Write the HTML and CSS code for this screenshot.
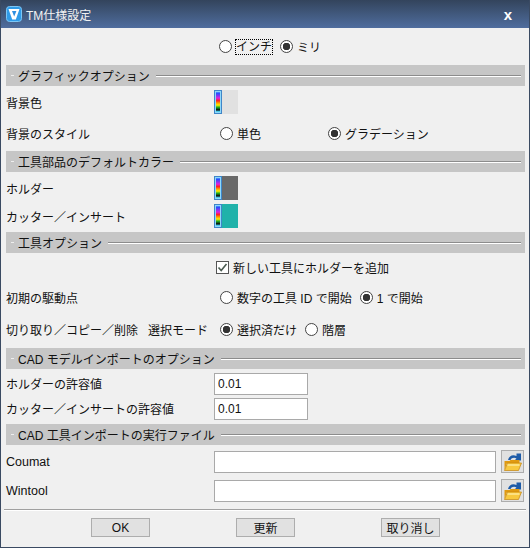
FILE: index.html
```html
<!DOCTYPE html>
<html lang="ja">
<head>
    <meta charset="UTF-8">
    <meta name="viewport" content="width=device-width, initial-scale=1.0">
    <title>TM仕様設定</title>
    <link rel="stylesheet" href="styles.css">
</head>
<body>
    <div class="dialog">
        <div class="titlebar">
            <svg class="app-icon" width="16" height="16" viewBox="0 0 16 16">
                <rect x="0.5" y="0.5" width="15" height="15" rx="3" fill="#2f9be8" stroke="#7cc6f5"/>
                <path d="M2.5 3h11L9.8 13.5H6.2Z" fill="#fff"/>
                <path d="M6 5h4.4L8.2 10.5Z" fill="#2f8fe0"/>
            </svg>
            <span class="title-text">TM仕様設定</span>
            <span class="close">x</span>
        </div>

        <div class="content">
            <div class="unit-row">
                <label class="option"><input type="radio" name="unit"><span class="focused">インチ</span></label>
                <label class="option"><input type="radio" name="unit" checked><span>ミリ</span></label>
            </div>

            <div class="section-bar"><span class="section-title">グラフィックオプション</span><span class="section-line"></span></div>
            <div class="row swatch-row-first">
                <span class="row-label">背景色</span>
                <div class="swatch"><span class="rainbow"></span><span class="swatch-color color-bg"></span></div>
            </div>
            <div class="row row-30">
                <span class="row-label">背景のスタイル</span>
                <div class="options">
                    <label class="option option-wide"><input type="radio" name="bg"><span>単色</span></label>
                    <label class="option"><input type="radio" name="bg" checked><span>グラデーション</span></label>
                </div>
            </div>

            <div class="section-bar bar-gap"><span class="section-title">工具部品のデフォルトカラー</span><span class="section-line"></span></div>
            <div class="row row-28 first-after-bar">
                <span class="row-label">ホルダー</span>
                <div class="swatch"><span class="rainbow"></span><span class="swatch-color color-holder"></span></div>
            </div>
            <div class="row row-28">
                <span class="row-label">カッター／インサート</span>
                <div class="swatch"><span class="rainbow"></span><span class="swatch-color color-cutter"></span></div>
            </div>

            <div class="section-bar bar-gap-small"><span class="section-title">工具オプション</span><span class="section-line"></span></div>
            <div class="row row-28">
                <span class="row-label"></span>
                <label class="option check-option">
                    <span class="checkbox">
                        <svg width="11" height="11" viewBox="0 0 11 11"><path d="M1.5 5.5L4.2 8.5L9.5 2" fill="none" stroke="#4a5a50" stroke-width="1.6"/></svg>
                    </span>
                    <span>新しい工具にホルダーを追加</span>
                </label>
            </div>
            <div class="row row-32">
                <span class="row-label">初期の駆動点</span>
                <div class="options">
                    <label class="option"><input type="radio" name="start"><span>数字の工具 ID で開始</span></label>
                    <label class="option"><input type="radio" name="start" checked><span>1 で開始</span></label>
                </div>
            </div>
            <div class="row row-32">
                <span class="row-label">切り取り／コピー／削除<span class="mode-name">選択モード</span></span>
                <div class="options">
                    <label class="option"><input type="radio" name="mode" checked><span>選択済だけ</span></label>
                    <label class="option"><input type="radio" name="mode"><span>階層</span></label>
                </div>
            </div>

            <div class="section-bar bar-gap"><span class="section-title">CAD モデルインポートのオプション</span><span class="section-line"></span></div>
            <div class="row row-25 first-after-bar">
                <span class="row-label">ホルダーの許容値</span>
                <input class="text-input short" type="text" value="0.01">
            </div>
            <div class="row row-25">
                <span class="row-label">カッター／インサートの許容値</span>
                <input class="text-input short" type="text" value="0.01">
            </div>

            <div class="section-bar bar-gap"><span class="section-title">CAD 工具インポートの実行ファイル</span><span class="section-line"></span></div>
            <div class="row row-29 first-after-bar">
                <span class="row-label latin">Coumat</span>
                <input class="text-input long" type="text">
                <button class="folder-btn" type="button">
                    <svg width="18" height="18" viewBox="0 0 18 18">
                        <path d="M4 7C5 2.5 9 1 12.5 3V0.5H17V7.5H10.5L12.5 5.5C10 4 7.5 5 6.5 7Z" fill="#1d5ba8"/>
                        <path d="M0.5 8h5l1-1h9v3H3L0.5 17Z" fill="#e09a10"/>
                        <path d="M3.5 10H17.5L14.5 17.5H0.5Z" fill="#f8c93f" stroke="#c5850f" stroke-width="0.7"/>
                        <path d="M3.5 12h12" stroke="#fff2b0" stroke-width="1.2"/>
                    </svg>
                </button>
            </div>
            <div class="row row-29">
                <span class="row-label latin">Wintool</span>
                <input class="text-input long" type="text">
                <button class="folder-btn" type="button">
                    <svg width="18" height="18" viewBox="0 0 18 18">
                        <path d="M4 7C5 2.5 9 1 12.5 3V0.5H17V7.5H10.5L12.5 5.5C10 4 7.5 5 6.5 7Z" fill="#1d5ba8"/>
                        <path d="M0.5 8h5l1-1h9v3H3L0.5 17Z" fill="#e09a10"/>
                        <path d="M3.5 10H17.5L14.5 17.5H0.5Z" fill="#f8c93f" stroke="#c5850f" stroke-width="0.7"/>
                        <path d="M3.5 12h12" stroke="#fff2b0" stroke-width="1.2"/>
                    </svg>
                </button>
            </div>

            <hr class="separator">
            <div class="buttons">
                <button type="button">OK</button>
                <button type="button">更新</button>
                <button type="button">取り消し</button>
            </div>
        </div>
    </div>
</body>
</html>
```

FILE: styles.css
```css
* {
    box-sizing: border-box;
}

body {
    margin: 0;
    background: #fff;
    font-family: "Liberation Sans", "Noto Sans CJK JP", sans-serif;
    font-size: 12px;
    color: #111;
}

.dialog {
    width: 530px;
    height: 548px;
    background: #f0f0f0;
    border: 1px solid #3a4a62;
    border-top: 0;
    overflow: hidden;
}

.titlebar {
    height: 28px;
    margin: 0 -1px;
    padding: 0 18px 0 6px;
    display: flex;
    align-items: center;
    background: linear-gradient(#33445c, #4f6d9e);
    color: #fff;
}

.app-icon {
    flex: none;
}

.title-text {
    margin-left: 4px;
    color: #f2f2f2;
}

.close {
    margin-left: auto;
    font-size: 15px;
    font-weight: bold;
    line-height: 1;
}

.content {
    padding: 0 4px 0 5px;
}

.unit-row {
    height: 37px;
    padding-left: 213px;
    display: flex;
    align-items: center;
    gap: 8px;
}

.option {
    display: flex;
    align-items: center;
    gap: 4px;
}

.option-wide {
    width: 100px;
}

.options {
    padding-left: 6px;
    display: flex;
    gap: 8px;
}

.option input {
    appearance: none;
    width: 13px;
    height: 13px;
    margin: 0;
    flex: none;
    border: 1px solid #444;
    border-radius: 50%;
    background: #fff;
}

.option input:checked {
    background: radial-gradient(circle, #333 0, #333 3.5px, #fff 4px);
}

.focused {
    outline: 1px dotted #000;
    line-height: 14px;
}

.check-option {
    padding-left: 2px;
}

.checkbox {
    width: 13px;
    height: 13px;
    border: 1px solid #555;
    background: #fff;
    display: flex;
    align-items: center;
    justify-content: center;
}

.section-bar {
    height: 21px;
    padding: 0 4px 0 12px;
    display: flex;
    align-items: center;
    gap: 6px;
    background: #c6c6c6;
    position: relative;
}

/* little dot in front of the section name */
.section-bar::before {
    content: "";
    position: absolute;
    left: 5px;
    top: 10px;
    width: 3px;
    height: 1px;
    background: #eee;
}

.section-title {
    white-space: nowrap;
}

.section-line {
    flex: 1;
    height: 2px;
    background: #8c8c8c;
    border-bottom: 1px solid #fff;
}

.bar-gap {
    margin-top: 3px;
}

.bar-gap-small {
    margin-top: 2px;
}

.row {
    display: flex;
    align-items: center;
}

.first-after-bar {
    margin-top: 2px;
}

.swatch-row-first {
    height: 32px;
}

.row-25 {
    height: 25px;
}

.row-28 {
    height: 28px;
}

.row-29 {
    height: 29px;
}

.row-30 {
    height: 30px;
}

.row-32 {
    height: 32px;
}

.row-label {
    width: 208px;
    flex: none;
    white-space: nowrap;
}

.latin {
    font-size: 12.5px;
}

.mode-name {
    margin-left: 10px;
}

.swatch {
    width: 24px;
    height: 24px;
    display: flex;
}

.rainbow {
    width: 8px;
    border: 1px solid #3f86c8;
    box-shadow: inset 0 0 0 1px #8fd8fa;
    background: linear-gradient(#8fe0ff 0, #2050ff 10%, #e020e0 32%, #ff2020 44%, #ff9a00 54%, #ffee00 64%, #20b020 74%, #0a0a0a 86%, #50e0ff 94%);
}

.swatch-color {
    flex: 1;
}

.color-bg {
    background: #e1e1e1;
}

.color-holder {
    background: #696969;
}

.color-cutter {
    background: #20b2aa;
}

.text-input {
    height: 22px;
    padding: 0 3px;
    border: 1px solid #a9a9a9;
    background: #fff;
    font: inherit;
    color: inherit;
}

.short {
    width: 94px;
}

.long {
    width: 282px;
}

.folder-btn {
    width: 23px;
    height: 23px;
    margin-left: 5px;
    padding: 0;
    display: flex;
    align-items: center;
    justify-content: center;
    border: 1px solid #adadad;
    background: #e1e1e1;
}

.separator {
    margin: 4px -1px 0 -2px;
    height: 0;
    border: 0;
    border-top: 1px solid #a0a0a0;
    border-bottom: 1px solid #fff;
}

.buttons {
    margin-top: 7px;
    padding-left: 85px;
    display: flex;
    gap: 86px;
}

.buttons button {
    width: 59px;
    height: 19px;
    padding: 0;
    border: 1px solid #adadad;
    background: #e1e1e1;
    font: inherit;
    color: inherit;
}
```
